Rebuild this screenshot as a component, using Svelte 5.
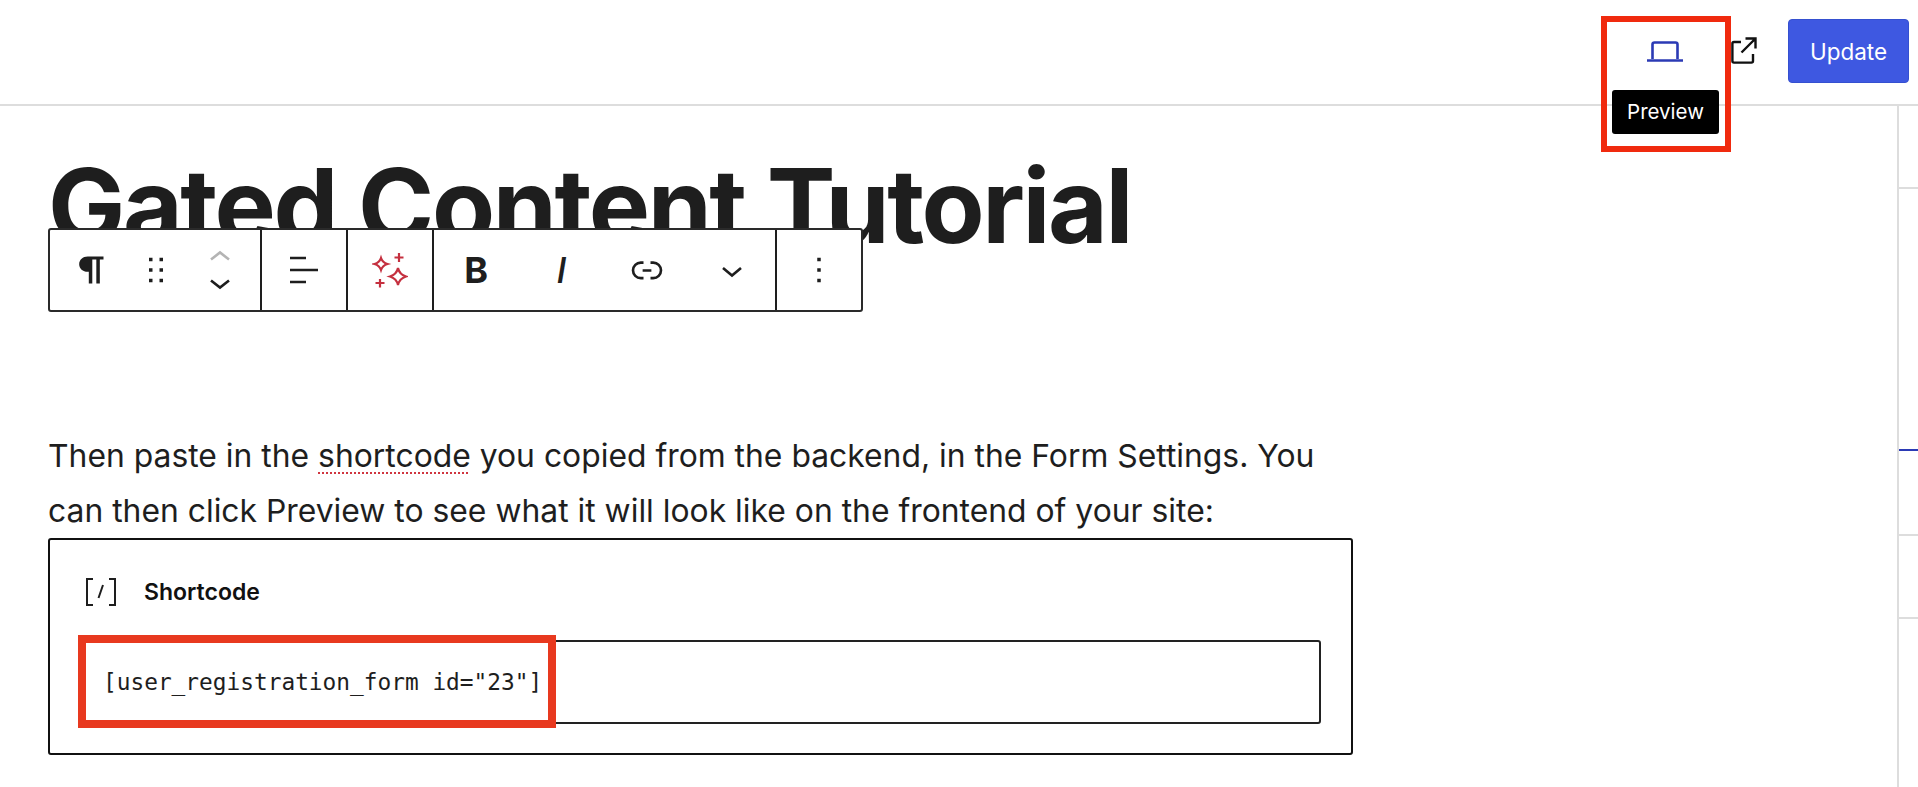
<script>
  const railTicks = ['tick--first', 'tick--active', 'tick--third', 'tick--fourth'];
</script>

<div class="page">
  <header class="topbar">
    <div class="preview">
      <svg class="laptop" width="36" height="22" viewBox="0 0 36 22" fill="none" stroke="#2b3ab5" stroke-width="2.600">
        <path d="M5.500 18V3.500a2 2 0 0 1 2-2h21a2 2 0 0 1 2 2V18" />
        <path d="M0 19.500h36" />
      </svg>
      <span class="tooltip">Preview</span>
      <span class="mark mark--preview"></span>
    </div>
    <svg class="external" width="26" height="27" viewBox="0 0 26 27" fill="none" stroke="#111" stroke-width="2.400">
      <path d="M10 5H3a1.600 1.600 0 0 0-1.600 1.600v17.400A1.600 1.600 0 0 0 3 25.600h17.400a1.600 1.600 0 0 0 1.600-1.600V17" />
      <path d="M10.500 15.500 24 2M14.500 1.500H24.500V11.500" />
    </svg>
    <button class="update">Update</button>
  </header>

  <div class="body">
    <main class="canvas">
      <h1>Gated Content Tutorial</h1>

      <div class="toolbar">
        <div class="group group--first">
          <span class="tool tool--narrow">
            <svg width="42" height="42" viewBox="0 0 24 24" fill="#1e1e1e">
              <path d="M18 4.300H9C6.200 4.300 4.100 6.200 4.100 8.700S6.200 13 9 13h.6v6.700h2V6h2.300v13.700h2V6H18z" />
            </svg>
          </span>
          <span class="tool tool--narrow">
            <svg width="42" height="42" viewBox="0 0 24 24" fill="#1e1e1e">
              <path d="M8 7h2V5H8v2zm0 6h2v-2H8v2zm0 6h2v-2H8v2zm6-14v2h2V5h-2zm0 8h2v-2h-2v2zm0 6h2v-2h-2v2z" />
            </svg>
          </span>
          <span class="tool tool--narrow">
            <svg width="24" height="42" viewBox="0 0 24 42" fill="none" stroke-width="2.600">
              <path d="M3 10.500 12 3.500 21 10.500" stroke="#b4b4b4" />
              <path d="M3 31.500 12 38.500 21 31.500" stroke="#1e1e1e" />
            </svg>
          </span>
        </div>
        <div class="group">
          <span class="tool">
            <svg width="32" height="30" viewBox="0 0 32 30" fill="none" stroke="#1e1e1e" stroke-width="2.600">
              <path d="M2 3h16M2 15h28M2 27h16" />
            </svg>
          </span>
        </div>
        <div class="group">
          <span class="tool">
            <svg width="36" height="36" viewBox="0 0 36 36" fill="none" stroke="#c5303f" stroke-width="2.200">
              <path d="M9 6 Q10.500 10.500 15.500 12 Q10.500 13.500 9 18 Q7.500 13.500 2.500 12 Q7.500 10.500 9 6Z" />
              <path d="M26 16 Q27.500 22.500 34 24.500 Q27.500 26.500 26 33 Q24.500 26.500 18 24.500 Q24.500 22.500 26 16Z" />
              <path d="M27 1v9M22.500 5.500h9M8 27v8.500M3.500 31h9" />
            </svg>
          </span>
        </div>
        <div class="group">
          <span class="tool tool--wide"><b class="letter">B</b></span>
          <span class="tool tool--wide"><i class="letter letter--italic">I</i></span>
          <span class="tool tool--wide">
            <svg width="42" height="42" viewBox="0 0 24 24" fill="#1e1e1e">
              <path d="M10 17.389H8.444A5.194 5.194 0 1 1 8.444 7H10v1.500H8.444a3.694 3.694 0 0 0 0 7.389H10v1.500ZM14 7h1.556a5.194 5.194 0 0 1 0 10.390H14v-1.500h1.556a3.694 3.694 0 0 0 0-7.390H14V7Zm-4.500 6h5v-1.500h-5V13Z" />
            </svg>
          </span>
          <span class="tool tool--wide">
            <svg class="more" width="22" height="12" viewBox="0 0 22 12" fill="none" stroke="#1e1e1e" stroke-width="2.600">
              <path d="M2 2 11 9.500 20 2" />
            </svg>
          </span>
        </div>
        <div class="group group--last">
          <span class="tool">
            <svg width="42" height="42" viewBox="0 0 24 24" fill="#1e1e1e">
              <path d="M13 19h-2v-2h2v2zm0-6h-2v-2h2v2zm0-6h-2V5h2v2z" />
            </svg>
          </span>
        </div>
      </div>

      <p>
        Then paste in the <span class="misspelled">shortcode</span> you copied from the backend, in the Form Settings. You
        can then click Preview to see what it will look like on the frontend of your site:
      </p>

      <section class="shortcode">
        <div class="shortcode__head">
          <svg width="32" height="28" viewBox="0 0 32 28" fill="none" stroke="#1e1e1e" stroke-width="2">
            <path d="M8 1H2v26h6M24 1h6v26h-6M13.500 20 18 7" />
          </svg>
          <span class="shortcode__label">Shortcode</span>
        </div>
        <div class="shortcode__input">
          [user_registration_form id="23"]
          <span class="mark mark--input"></span>
        </div>
      </section>
    </main>

    <aside class="rail">
      {#each railTicks as tick}
        <span class="tick {tick}"></span>
      {/each}
    </aside>
  </div>
</div>

<style>
  :global(body) {
    background: #fff;
  }
  .page {
    height: 787px;
    overflow: hidden;
    display: flex;
    flex-direction: column;
    font-family: Inter, 'Liberation Sans', sans-serif;
    color: #1e1e1e;
  }
  .topbar {
    flex: none;
    height: 104px;
    box-sizing: content-box;
    border-bottom: 2px solid #ddd;
    display: flex;
    justify-content: flex-end;
    align-items: flex-start;
    padding-right: 9px;
  }
  .preview {
    position: relative;
    width: 36px;
    margin-top: 41px;
    margin-right: 48px;
    line-height: 0;
  }
  .tooltip {
    position: absolute;
    top: 49px;
    left: -35px;
    width: 107px;
    height: 44px;
    border-radius: 3px;
    background: #000;
    color: #fff;
    font-size: 20.500px;
    line-height: 44px;
    text-align: center;
  }
  .mark {
    position: absolute;
    box-sizing: border-box;
  }
  .mark--preview {
    top: -25px;
    left: -46px;
    width: 130px;
    height: 136px;
    border: 6px solid #f02a0e;
  }
  .external {
    margin-top: 37px;
    margin-right: 31px;
  }
  .update {
    margin-top: 19px;
    width: 121px;
    height: 64px;
    border: 1px solid #3550d0;
    border-radius: 4px;
    background: #3e58e1;
    color: #fff;
    font-family: inherit;
    font-size: 22.500px;
  }
  .body {
    flex: 1;
    min-height: 0;
    display: flex;
  }
  .canvas {
    position: relative;
    flex: 1;
    padding-left: 48px;
  }
  h1 {
    margin: 36px 0 0;
    font-size: 103px;
    line-height: 128px;
    font-weight: 700;
    letter-spacing: -2.400px;
    white-space: nowrap;
  }
  .toolbar {
    position: absolute;
    top: 122px;
    left: 48px;
    display: flex;
    height: 84px;
    box-sizing: border-box;
    border: 2px solid #2a2a2a;
    border-radius: 3px;
    background: #fff;
  }
  .group {
    display: flex;
    border-right: 2px solid #1e1e1e;
  }
  .group--first {
    padding-left: 11px;
    padding-right: 8px;
  }
  .group--last {
    border-right: 0;
  }
  .tool {
    width: 84px;
    display: flex;
    align-items: center;
    justify-content: center;
  }
  .tool--narrow {
    width: 63.500px;
  }
  .tool--wide {
    width: 85.250px;
  }
  .letter {
    font-size: 36px;
    font-weight: 700;
    line-height: 1;
  }
  .letter--italic {
    font-weight: 500;
    font-style: italic;
  }
  .more {
    margin-top: 3px;
  }
  p {
    margin: 158px 0 0;
    width: 1290px;
    font-size: 31.850px;
    line-height: 55px;
  }
  .misspelled {
    text-decoration: underline dotted #d0353f 2px;
    text-underline-offset: 5px;
  }
  .shortcode {
    box-sizing: border-box;
    width: 1305px;
    height: 217px;
    margin-top: 0;
    border: 2px solid #111;
    border-radius: 3px;
    padding: 0 30px;
  }
  .shortcode__head {
    display: flex;
    align-items: center;
    gap: 27px;
    height: 100px;
    padding-left: 5px;
    padding-top: 3px;
    box-sizing: border-box;
  }
  .shortcode__label {
    font-size: 23px;
    font-weight: 600;
    color: #111;
  }
  .shortcode__input {
    position: relative;
    box-sizing: border-box;
    height: 84px;
    border: 2px solid #222;
    border-radius: 3px;
    padding-left: 21px;
    font-family: 'DejaVu Sans Mono', monospace;
    font-size: 22.800px;
    line-height: 80px;
    white-space: nowrap;
    color: #1e1e1e;
  }
  .mark--input {
    top: -7px;
    left: -4px;
    width: 478px;
    height: 93px;
    border: 8px solid #e8391f;
  }
  .rail {
    flex: none;
    width: 19px;
    border-left: 2px solid #ddd;
    display: flex;
    flex-direction: column;
  }
  .tick {
    height: 2px;
    background: #ddd;
  }
  .tick--first {
    margin-top: 81px;
  }
  .tick--active {
    margin-top: 260px;
    background: #2b3ab5;
  }
  .tick--third {
    margin-top: 83px;
  }
  .tick--fourth {
    margin-top: 81px;
  }
</style>
